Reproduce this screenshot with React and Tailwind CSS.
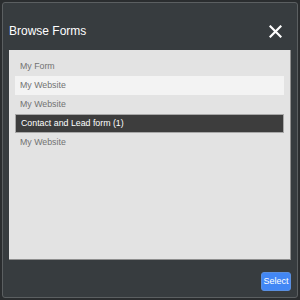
import React from "react"

const items = [
    { label: "My Form", state: "" },
    { label: "My Website", state: "hover" },
    { label: "My Website", state: "" },
    { label: "Contact and Lead form (1)", state: "active" },
    { label: "My Website", state: "" },
]

function Row({ label, state }) {
    const base = "h-[19px] flex items-center px-[5px] text-[8.8px] leading-none"
    if (state === "active") {
        return (
            <div className={`${base} bg-[#3d3d3d] text-white border border-[#a8a8a8] px-[4px]`}>
                {label}
            </div>
        )
    }
    if (state === "hover") {
        return <div className={`${base} bg-[#f3f3f3] text-[#727272]`}>{label}</div>
    }
    return <div className={`${base} text-[#727272]`}>{label}</div>
}

export default function App() {
    return (
        <div
            className="w-[300px] h-[300px] bg-[#2a2d2f] p-[2px]"
            style={{ fontFamily: "'Liberation Sans', Arial, sans-serif" }}
        >
            <div className="h-full rounded-[3px] border border-[#5b5f61] bg-[#373c3f] px-[6px] flex flex-col">
                {/* Header */}
                <div className="h-[47px] flex items-center justify-between pt-[9px]">
                    <h2 className="text-[12px] text-white leading-none">Browse Forms</h2>
                    <svg width="13" height="13" viewBox="0 0 13 13" className="mr-[9px] mt-[1px]">
                        <path d="M1.5 1.5 L11.5 11.5 M11.5 1.5 L1.5 11.5" stroke="#fff" strokeWidth="2.2" strokeLinecap="square" />
                    </svg>
                </div>

                {/* List */}
                <div className="h-[210px] bg-[#e3e3e3] border-r border-b border-[#8f8f8f] pt-[7px] px-[6px]">
                    {items.map((it, i) => (
                        <Row key={i} {...it} />
                    ))}
                </div>

                {/* Footer */}
                <div className="flex justify-end pt-[12px]">
                    <button className="h-[19px] w-[30px] rounded-[3px] bg-[#4287f5] text-white text-[9px] leading-none border border-[#5a8fe0]">
                        Select
                    </button>
                </div>
            </div>
        </div>
    )
}
